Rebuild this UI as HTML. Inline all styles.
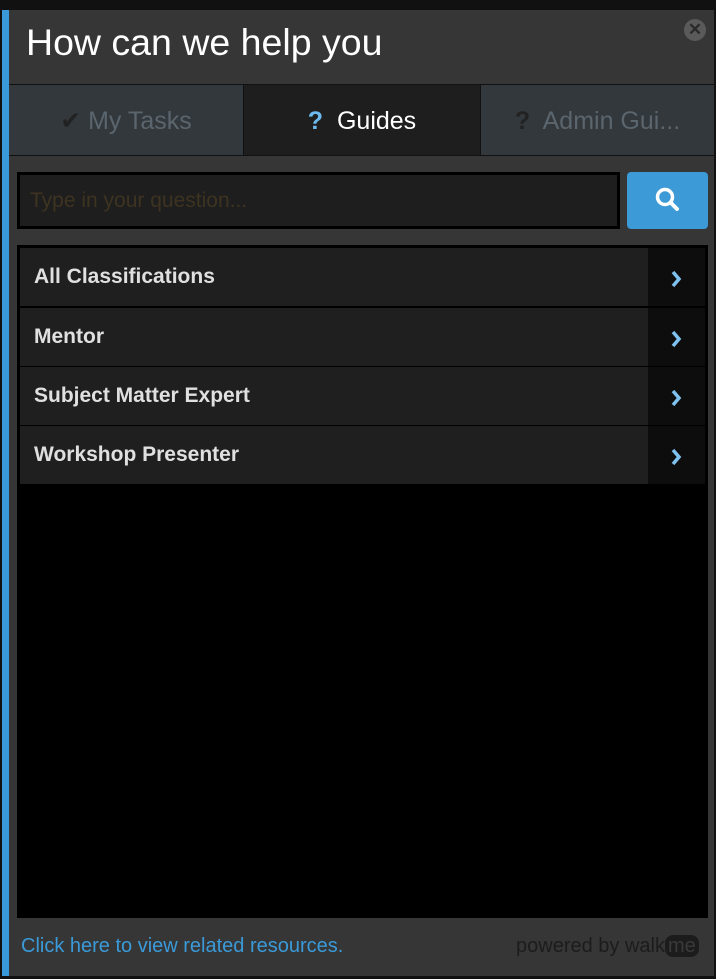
<!DOCTYPE html>
<html><head><style>
*{margin:0;padding:0;box-sizing:border-box}
body{width:716px;height:979px;background:#111;position:relative;overflow:hidden;font-family:"Liberation Sans",sans-serif}
.p{position:absolute;left:2px;top:10px;width:712px;height:966px;background:#363636;border-left:7px solid #3a9ad9}
.a{position:absolute}
.tab{position:absolute;top:84px;height:72px;font-size:25px;line-height:72px;text-align:center;border-top:1px solid #111;border-bottom:1px solid #111}
.row{position:absolute;left:20px;width:685px;height:58px;background:#1f1f1f;color:#e0e0e0;font-weight:bold;font-size:21px;line-height:58px;padding-left:14px}
.row .ar{position:absolute;right:0;top:0;width:57px;height:58px;background:#0d0d0d}
</style></head><body>
<div class="p"></div>
<div class="a" style="left:26px;top:21px;color:#fff;font-size:37.5px">How can we help you</div>
<div class="a" style="left:684px;top:19px;width:22px;height:22px;border-radius:50%;background:#5a5a5a;color:#2a2a2a;font-size:17px;font-weight:bold;text-align:center;line-height:22px">✕</div>
<div class="tab" style="left:9px;width:234px;background:#33383c;color:#5b656d"><span style="color:#222">✔</span> My Tasks</div>
<div class="tab" style="left:243px;width:238px;background:#1e1e1e;color:#fff;border-left:1px solid #111;border-right:1px solid #111"><span style="color:#6bb9ee;font-weight:bold">?</span>&nbsp; Guides</div>
<div class="tab" style="left:481px;width:233px;background:#33383c;color:#5b656d"><span style="color:#222;font-weight:bold">?</span>&nbsp; Admin Gui...</div>
<div class="a" style="left:17px;top:172px;width:603px;height:57px;background:#1e1e1e;border:3px solid #000;color:#3d3320;font-size:21px;line-height:51px;padding-left:10px">Type in your question...</div>
<div class="a" style="left:627px;top:172px;width:81px;height:57px;background:#3c9ad6;border-radius:4px">
<svg width="81" height="57"><circle cx="38" cy="25" r="7.5" fill="none" stroke="#fff" stroke-width="3.5"/><line x1="43.5" y1="30.5" x2="50" y2="37" stroke="#fff" stroke-width="4" stroke-linecap="round"/></svg></div>
<div class="a" style="left:17px;top:245px;width:691px;height:673px;background:#000"></div>
<div class="row" style="top:248px">All Classifications<div class="ar"><svg width="57" height="58"><path d="M25 24l6 7-6 7" fill="none" stroke="#7fc2f0" stroke-width="3.5"/></svg></div></div>
<div class="row" style="top:308px">Mentor<div class="ar"><svg width="57" height="58"><path d="M25 24l6 7-6 7" fill="none" stroke="#7fc2f0" stroke-width="3.5"/></svg></div></div>
<div class="row" style="top:367px">Subject Matter Expert<div class="ar"><svg width="57" height="58"><path d="M25 24l6 7-6 7" fill="none" stroke="#7fc2f0" stroke-width="3.5"/></svg></div></div>
<div class="row" style="top:426px">Workshop Presenter<div class="ar"><svg width="57" height="58"><path d="M25 24l6 7-6 7" fill="none" stroke="#7fc2f0" stroke-width="3.5"/></svg></div></div>
<div class="a" style="left:21px;top:935px;color:#3a9ad9;font-size:20px">Click here to view related resources.</div>
<div class="a" style="left:516px;top:935px;color:#1c1c1c;font-size:20px">powered by walk<span style="background:#1c1c1c;color:#3a3a3a;border-radius:8px;padding:0 3px">me</span></div>
</body></html>
